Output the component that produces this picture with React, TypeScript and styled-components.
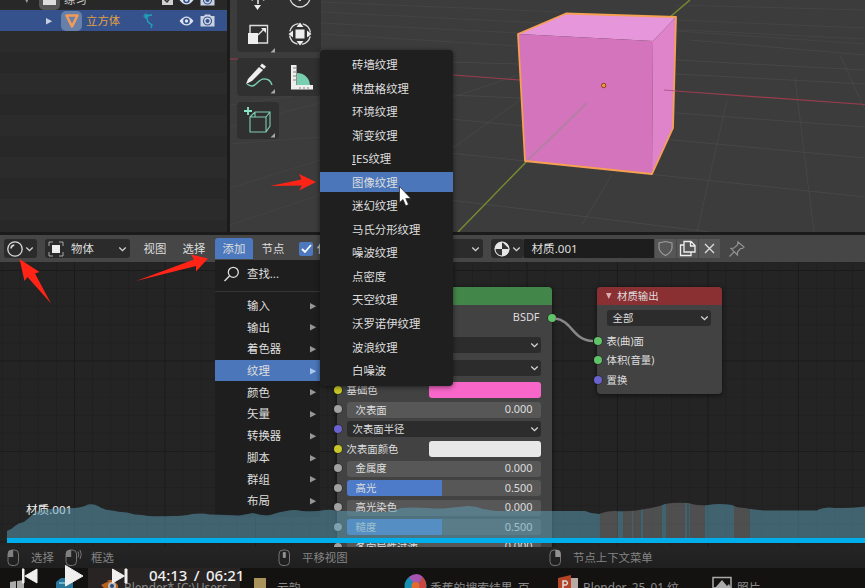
import React from "react";
import styled, { createGlobalStyle } from "styled-components";

const Global = createGlobalStyle`
  * { box-sizing: border-box; }
  body { margin: 0; overflow: hidden; background: #1b1b1b; }
`;

const Screen = styled.div`
  position: relative;
  width: 865px;
  height: 588px;
  overflow: hidden;
  display: grid;
  grid-template-rows: 235px 27px 285px 21px 20px;
  font: 11.4px/1 "Noto Sans", "Noto Sans CJK SC", sans-serif;
  color: #dedede;
  white-space: nowrap;
`;

/* ---------- upper editors ---------- */
const TopArea = styled.div`
  display: grid;
  grid-template-columns: 227px 635px;
  column-gap: 3px;
  height: 232px;
  overflow: hidden;
`;
const Outliner = styled.div`
  background: repeating-linear-gradient(#282828 0 21px, #2b2b2b 21px 42px);
  background-position: 0 10px;
`;
const OutlinerRow = styled.div<{ $active?: boolean; $indent: number }>`
  display: flex;
  align-items: center;
  height: 21px;
  padding-left: ${(p) => p.$indent}px;
  margin-top: ${(p) => (p.$active ? 0 : -11)}px;
  background: ${(p) => (p.$active ? "#35528c" : "transparent")};
  color: ${(p) => (p.$active ? "#e6a040" : "#c8c8c8")};
`;
const RowIcon = styled.span<{ $bg: string }>`
  display: grid;
  place-items: center;
  width: 21px;
  height: 20px;
  margin: 0 4px 0 8px;
  border-radius: 5px;
  background: ${(p) => p.$bg};
`;
const BoneSlot = styled.span`
  display: grid;
  margin-left: 12px;
`;
const RowTools = styled.span`
  display: flex;
  align-items: center;
  gap: 6px;
  margin: 0 12px 0 auto;
`;
const Viewport = styled.div`
  position: relative;
  background: #3c3c3c;
  overflow: hidden;
`;
const Scene = styled.svg`
  position: absolute;
  inset: 0;
`;
const ToolShelf = styled.div`
  position: absolute;
  left: 7px;
  top: -19px;
  display: flex;
  flex-direction: column;
  align-items: flex-start;
  gap: 6px;
`;
const ToolGroup = styled.div<{ $cols: number; $h: number }>`
  display: grid;
  grid-template-columns: repeat(${(p) => p.$cols}, 42px);
  height: ${(p) => p.$h}px;
  border-radius: 4px;
  background: #303030;
`;
const Tool = styled.div`
  display: grid;
  place-items: center;
  height: 36px;
`;

/* ---------- node editor header ---------- */
const Header = styled.div`
  display: flex;
  align-items: center;
  padding: 0 0 0 4px;
  background: #464646;
`;
const Chip = styled.div<{ $w: number; $ml?: number }>`
  display: flex;
  align-items: center;
  justify-content: space-between;
  flex: none;
  width: ${(p) => p.$w}px;
  height: 19px;
  margin-left: ${(p) => p.$ml ?? 0}px;
  padding: 0 1px 0 3px;
  border-radius: 3px;
  background: #2b2b2b;
  svg { flex: none; }
`;
const ChipText = styled.span`
  flex: 1;
  margin-left: 7px;
`;
const Tab = styled.div<{ $w: number; $ml?: number; $on?: boolean }>`
  flex: none;
  width: ${(p) => p.$w}px;
  height: 21px;
  margin-left: ${(p) => p.$ml ?? 0}px;
  line-height: 21px;
  text-align: center;
  border-radius: 3px 3px 0 0;
  background: ${(p) => (p.$on ? "#4c78bd" : "transparent")};
`;
const Check = styled.div`
  display: grid;
  place-items: center;
  flex: none;
  width: 14px;
  height: 14px;
  margin: 0 4px 0 6px;
  border-radius: 2px;
  background: #4c78bd;
`;
const UseLabel = styled.span`
  flex: none;
  width: 12px;
`;
const NameField = styled.div`
  flex: none;
  width: 130px;
  height: 19px;
  padding-left: 8px;
  line-height: 19px;
  font-size: 11.6px;
  background: #1d1d1d;
`;
const SmallButton = styled.div`
  display: grid;
  place-items: center;
  width: 21px;
  height: 19px;
  margin-left: 1px;
  background: #565656;
`;
const PinSlot = styled.div`
  display: grid;
  margin-left: 8px;
`;

/* ---------- node canvas ---------- */
const Canvas = styled.div`
  position: relative;
  overflow: hidden;
  background-color: #242424;
  background-image:
    linear-gradient(90deg, #1b1b1b 1px, transparent 1px),
    linear-gradient(#1b1b1b 1px, transparent 1px),
    linear-gradient(90deg, #202020 1px, transparent 1px),
    linear-gradient(#202020 1px, transparent 1px);
  background-size: 90.5px 90.5px, 90.5px 90.5px, 18.1px 18.1px, 18.1px 18.1px;
  background-position: 74px 8px;
`;
const CanvasLabel = styled.div`
  position: absolute;
  left: 26px;
  top: 242px;
  font-size: 11.6px;
  color: #f0f0f0;
`;
const Node = styled.div<{ $x: number; $w: number; $h: number }>`
  position: absolute;
  left: ${(p) => p.$x}px;
  top: 24.5px;
  width: ${(p) => p.$w}px;
  height: ${(p) => p.$h}px;
  border-radius: 4px;
  background: #424242;
  box-shadow: 0 1px 5px #0009;
  font-size: 10.4px;
`;
const NodeTitle = styled.div<{ $c: string }>`
  display: flex;
  align-items: center;
  gap: 4px;
  height: 18.5px;
  padding-left: 8px;
  border-radius: 4px 4px 0 0;
  background: ${(p) => p.$c};
`;
const Rows = styled.div<{ $top: number }>`
  display: flex;
  flex-direction: column;
  gap: 3.1px;
  padding: ${(p) => p.$top}px 11.5px 0 9.5px;
`;
const Row = styled.div<{ $mb?: number; $end?: boolean }>`
  position: relative;
  display: flex;
  align-items: center;
  justify-content: ${(p) => (p.$end ? "flex-end" : "space-between")};
  height: 16.5px;
  margin-bottom: ${(p) => p.$mb ?? 0}px;
`;
const Socket = styled.i<{ $c: string; $right?: boolean }>`
  position: absolute;
  ${(p) => (p.$right ? "right: -15px" : "left: -13px")};
  top: 4px;
  width: 8px;
  height: 8px;
  border-radius: 50%;
  background: ${(p) => p.$c};
  box-shadow: 0 0 0 0.5px #1c1c1c;
`;
const Value = styled.span`
  font-size: 10.9px;
`;
const OutLabel = styled(Value)`
  margin-right: 1px;
`;
const Field = styled.div<{ $fill?: number; $dark?: boolean }>`
  flex: 1;
  display: flex;
  align-items: center;
  justify-content: space-between;
  height: 16px;
  padding: 0 ${(p) => (p.$dark ? "0 0 6px" : "8px 0 9px")};
  border-radius: 3px;
  background: ${(p) =>
    p.$dark ? "#2c2c2c" : `linear-gradient(90deg, #4d7bc9 ${p.$fill ?? 0}%, #575757 ${p.$fill ?? 0}%)`};
`;
const Swatch = styled.div<{ $c: string }>`
  width: 112px;
  height: 16.5px;
  border-radius: 3px;
  background: ${(p) => p.$c};
`;
const Link = styled.svg`
  position: absolute;
  left: 545px;
  top: 45px;
`;

/* ---------- menus ---------- */
const AddMenu = styled.div`
  position: absolute;
  left: 215px;
  top: 259.5px;
  width: 105px;
  height: 257px;
  padding-top: 4px;
  background: #1e1e1e;
`;
const SearchRow = styled.div`
  display: flex;
  align-items: center;
  gap: 7px;
  height: 21px;
  padding-left: 8px;
`;
const Separator = styled.div`
  height: 1px;
  margin: 6px 0 3.8px;
  background: #353535;
`;
const AddItem = styled.div<{ $on?: boolean }>`
  display: flex;
  align-items: center;
  justify-content: space-between;
  height: 20.5px;
  margin-bottom: 1.22px;
  padding: 0 3px 0 32px;
  background: ${(p) => (p.$on ? "#4b76b9" : "transparent")};
`;
const TextureMenu = styled.div`
  position: absolute;
  left: 320px;
  top: 50px;
  width: 132.5px;
  height: 335.5px;
  padding-top: 4px;
  display: flex;
  flex-direction: column;
  gap: 3.05px;
  border-radius: 4px;
  background: #1f1f1f;
  box-shadow: 0 1px 5px #0008;
`;
const TextureItem = styled.div<{ $on?: boolean }>`
  flex: none;
  height: 20.5px;
  padding-left: 32px;
  line-height: 21px;
  background: ${(p) => (p.$on ? "#4b76b9" : "transparent")};
`;

/* ---------- bottom bars ---------- */
const StatusBar = styled.div`
  display: grid;
  grid-template-columns: 58px 213px 271px 1fr;
  align-items: center;
  padding-left: 7px;
  background: linear-gradient(#252525, #1f1f1f);
  color: #858585;
`;
const Hint = styled.span<{ $gap: number }>`
  display: flex;
  align-items: center;
  gap: ${(p) => p.$gap}px;
`;
const Taskbar = styled.div`
  display: grid;
  grid-template-columns: 45px 43px 152px 158px 156px 154px 157px;
  height: 20px;
  overflow: hidden;
  background: #141211;
  color: #8b8b8b;
`;
const Task = styled.div<{ $on?: boolean; $pl: number; $gap?: number }>`
  display: flex;
  gap: ${(p) => p.$gap ?? 4}px;
  padding-left: ${(p) => p.$pl}px;
  background: ${(p) => (p.$on ? "#272423" : "transparent")};
  svg { flex: none; }
`;
const TaskText = styled.span`
  padding-top: 14px;
  font-size: 11.8px;
`;

/* ---------- player overlay ---------- */
const Overlay = styled.svg`
  position: absolute;
  left: 0;
  top: 0;
  pointer-events: none;
`;
const Player = styled.div`
  position: absolute;
  left: 22px;
  top: 564px;
  height: 24px;
  display: flex;
  align-items: center;
  color: #efefef;
`;
const Time = styled.span`
  margin: -2px 0 0 21px;
  font: 500 15px/24px "Noto Sans", sans-serif;
  word-spacing: 2.5px;
`;

const Chevron = () => (
  <svg width="13" height="10" viewBox="0 0 13 10">
    <path d="M3.3 3.5 6.5 6.7 9.7 3.5" fill="none" stroke="#d6d6d6" strokeWidth="1.3" />
  </svg>
);
const Triangle = ({ down, color = "#a0a0a0" }: { down?: boolean; color?: string }) => (
  <svg width="8" height="8" viewBox="0 0 8 8">
    <path d={down ? "M1 1h5.5L3.8 7z" : "M1 1v6.4L7.2 4.2z"} fill={color} />
  </svg>
);
const Eye = () => (
  <svg width="15" height="12" viewBox="0 0 15 12">
    <path d="M.5 6Q7.5-3 14.5 6 7.5 15 .5 6" fill="#dce3ee" />
    <circle cx="7.5" cy="6" r="3.3" fill="#35528c" />
    <circle cx="7.5" cy="6" r="1.7" fill="#dce3ee" />
  </svg>
);
const Camera = () => (
  <svg width="15" height="13" viewBox="0 0 15 13">
    <path d="M.5 2H4L5 .5h5L11 2h3.5v10.5H.5z" fill="#c9d2e0" />
    <circle cx="7.5" cy="7" r="4" fill="none" stroke="#35528c" strokeWidth="1.1" />
    <circle cx="7.5" cy="7" r="2" fill="#35528c" />
  </svg>
);
const Mouse = ({ side }: { side: "left" | "mid" | "right" | "drag" }) => (
  <svg width={side === "drag" ? 17 : 13} height="18" viewBox={`0 0 ${side === "drag" ? 17 : 13} 18`}>
    <rect x="1" y="1" width="10.5" height="15.5" rx="4" fill="none" stroke="#747474" />
    {side === "mid" ? (
      <rect x="4.8" y="3" width="3" height="6" rx="1" fill="#929292" />
    ) : side === "right" ? (
      <path d="M6.3 1H9q2.5.5 2.5 3v4H6.3z" fill="#929292" />
    ) : (
      <path d="M6.2 1H4Q1 1.5 1 4v4h5.2z" fill="#808080" />
    )}
    {side === "drag" && <path d="M13 2.5q1.5 3 0 6M15 1q2.5 4.500 0 9" fill="none" stroke="#777" />}
  </svg>
);
const Corner = () => <path d="M36 31v4.500h-4.500z" fill="#a8a8a8" />;

const addItems = ["输入", "输出", "着色器", "纹理", "颜色", "矢量", "转换器", "脚本", "群组", "布局"];
const textures = [
  "砖墙纹理", "棋盘格纹理", "环境纹理", "渐变纹理", "IES纹理", "图像纹理", "迷幻纹理",
  "马氏分形纹理", "噪波纹理", "点密度", "天空纹理", "沃罗诺伊纹理", "波浪纹理", "白噪波",
];
const YELLOW = "#c7c729";
const GREY = "#a1a1a1";
const PURPLE = "#6a63cf";
const GREEN = "#5fc368";
const sliders: [string, string, number][] = [
  ["金属度", "0.000", 0],
  ["高光", "0.500", 49],
  ["高光染色", "0.000", 0],
  ["糙度", "0.500", 49],
  ["各向异性过滤", "0.000", 0],
];
const WAVE =
  "M7 539V531Q12 529 15 526T24 522Q29 518 34 513 41 509 52 509 67 508 75 508 83 507 88 504.500 94 503.500 98 506 103 510 112 510.500 118 512 127 512.500 135 515 142 515 150 517 172 516 184 516 192 514 202 513 210 514.500 230 515 239 515.500 246 514 253 513Q262 516 270 515 279 512 286 511 295 509 302 511 315 512 325 510 331 509 337 511L346 511 382 512Q393 511 401 508 411 507 428 508 439 509 448 508 459 507 468 506 476 506 483 509L496 511 585 511Q592 514 599 514 606 511 615 511 632 512 645 509 658 507 665 504 675 502 688 503 697 506 708 505 719 503 732 505 737 508 745 508 754 510 765 510.500L817 510.500Q824 506 835 508 853 508 865 506.500V539Z";
const stripes: [number, number][] = [
  [600, 18], [623, 9], [633, 7.500], [643, 8.500], [652, 9.500], [666, 19], [687, 2], [690.500, 14.500], [734, 15.500],
];

export default function App() {
  return (
    <>
      <Global />
      <Screen>
        <TopArea>
          <Outliner>
            <OutlinerRow $indent={23}>
              <Triangle down />
              <RowIcon $bg="#555">
                <svg width="13" height="11"><path d="M0 0h13v11H0z" fill="#ddd" /><path d="M4 4h5" stroke="#555" /></svg>
              </RowIcon>
              练习
              <RowTools>
                <svg width="11" height="11"><path d="M0 0h11v11H0z" fill="#d0d0d0" /><path d="m2 5 3 3 4-5" fill="none" stroke="#333" strokeWidth="1.5" /></svg>
                <Eye /><Camera />
              </RowTools>
            </OutlinerRow>
            <OutlinerRow $active $indent={45}>
              <Triangle color="#c6d1e2" />
              <RowIcon $bg="#6680aa">
                <svg width="16" height="16" viewBox="0 0 16 16"><path d="M2.500 2.500h11L8 13.500z" fill="none" stroke="#f39a58" strokeWidth="2.600" strokeLinejoin="round" /></svg>
              </RowIcon>
              立方体
              <BoneSlot>
                <svg width="24" height="18" viewBox="0 0 24 18">
                  <path d="M13 4 20 3M14 4l2 6 4 3-1 3" fill="none" stroke="#20a5b8" strokeWidth="1.300" />
                  <circle cx="14" cy="4" r="2" fill="none" stroke="#20a5b8" />
                </svg>
              </BoneSlot>
              <RowTools><Eye /><Camera /></RowTools>
            </OutlinerRow>
          </Outliner>
          <Viewport>
            <Scene width="635" height="232" viewBox="230 0 635 232">
              <g stroke="#4a4a4a" strokeWidth="1" fill="none">
                <path d="M230 105 320 92M230 127 330 100M230 144 320 137M230 188 320 160M230 225 320 195" strokeOpacity=".5" />
                <path d="M450 95 520 98M450 119 865 158M450 153 865 197M450 200 710 232M676 113 865 127M676 74 865 84M676 60 865 70M450 62 520 64" strokeOpacity=".8" />
                <path d="M450 150 520 100M612 174 582 225M727 100 697 232M795 78 814 232M840 55 865 110M690 40 865 55M450 98 518 75" strokeOpacity=".7" />
                <path d="M320 12 865 39M320 23 520 33M320 34 520 46M676 20 865 28M676 5 865 10M320 2 560 12M676 31 865 44" strokeOpacity=".55" />
              </g>
              <path d="M230 59h8M453 75l67 5" stroke="#9b3d4d" strokeWidth="1.200" />
              <path d="M690 0 670 17M527 161 458 232" stroke="#758a30" strokeWidth="1.500" />
              <path d="M518 34 566 13.500 676 17 653 41z" fill="#e696da" />
              <path d="M518 34 653 41 652 174 525 161z" fill="#d374bd" />
              <path d="M653 41 676 17 673 128 652 174z" fill="#df84ca" />
              <path d="M587 103 527 161" stroke="#ae829c" strokeWidth="2" strokeOpacity=".8" />
              <path d="M518 34 566 13.500 676 17 673 128 652 174 525 161z" fill="none" stroke="#f5a052" strokeWidth="1.800" strokeLinejoin="round" />
              <path d="M664 90 676 91" stroke="#aa5a8c" />
              <path d="m676 91 189 13.500" stroke="#9b3d4d" strokeWidth="1.200" />
              <circle cx="603.700" cy="85.500" r="2.200" fill="#ef9a3c" stroke="#8c3d1c" />
            </Scene>
            <ToolShelf>
              <ToolGroup $cols={2} $h={71}>
                <Tool><svg width="38" height="36"><path d="M19 16v7M9 17l5 2M29 17l-5 2" stroke="#eee" strokeWidth="1.500" /><path d="M15 24h7l-3.500 5z" fill="#eee" /></svg></Tool>
                <Tool><svg width="38" height="36"><circle cx="19" cy="16" r="10" fill="none" stroke="#ddd" strokeWidth="1.300" /><path d="m15 17 4 3 4-5" fill="none" stroke="#ddd" /></svg></Tool>
                <Tool><svg width="38" height="36"><path d="M11 18V8.500h17.500V26H18M19 18l6-6" fill="none" stroke="#ddd" strokeWidth="1.400" /><path d="M22 11h5v5z" fill="#eee" /><path d="M9 16h10v11H9z" fill="#eee" /><Corner /></svg></Tool>
                <Tool><svg width="38" height="36"><circle cx="19" cy="17" r="10.500" fill="none" stroke="#ddd" strokeWidth="1.400" strokeDasharray="12 4.500" strokeDashoffset="-2.500" /><path d="M14.500 12.500h9v9h-9zM15.500 10h7L19 5.500zM15.500 24h7L19 28.500zM12 13.500v7L7.500 17zM26 13.500v7l4.500-3.500z" fill="#eee" /></svg></Tool>
              </ToolGroup>
              <ToolGroup $cols={2} $h={38}>
                <Tool><svg width="38" height="36"><path d="m9 21 11-12 4 3-11 11-6 3z" fill="#eee" /><path d="m21 8 2-2.500 4 3-2 2.500z" fill="#eee" /><path d="M8 26c9 7 11-7 18-5 4 0 6 3 7 6" fill="none" stroke="#7dcdb2" strokeWidth="1.400" /><Corner /></svg></Tool>
                <Tool><svg width="38" height="36"><path d="M16 15c8 0 13 6 13 13H16z" fill="#77cfb0" /><path d="M10 7h5.500v20H32v4.500H10z" fill="#eee" /><path d="M15 10h-3m3 4h-3m3 4h-3m3 4h-3m7 9v-2m4 2v-2m4 2v-2" stroke="#555" strokeWidth=".7" /></svg></Tool>
              </ToolGroup>
              <ToolGroup $cols={1} $h={37}>
                <Tool><svg width="38" height="36"><path d="M11 15h16v15H11zM11 15l5-5h15v14l-4 6M27 15l4-5M16 10v5" fill="none" stroke="#7dcdb2" strokeWidth="1.100" /><path d="M9 5v8M5 9h8" stroke="#8ae7c5" strokeWidth="1.800" /><Corner /></svg></Tool>
              </ToolGroup>
            </ToolShelf>
          </Viewport>
        </TopArea>

        <Header>
          <Chip $w={33}>
            <svg width="16" height="16"><circle cx="8" cy="8" r="7.200" fill="none" stroke="#ddd" strokeWidth="1.300" /><path d="M4 7.500q.2-3 3.300-3.500" fill="none" stroke="#ddd" strokeWidth="1.600" /></svg>
            <Chevron />
          </Chip>
          <Chip $w={85} $ml={8}>
            <svg width="16" height="16"><path d="M5 1H1v4M11 1h4v4M1 11v4h4M15 11v4h-4" fill="none" stroke="#a9a9a9" /><path d="M4 4h8v8H4z" fill="#eee" /></svg>
            <ChipText>物体</ChipText>
            <Chevron />
          </Chip>
          <Tab $w={50}>视图</Tab>
          <Tab $w={28}>选择</Tab>
          <Tab $w={38} $ml={7} $on>添加</Tab>
          <Tab $w={40}>节点</Tab>
          <Check><svg width="11" height="10"><path d="m1 5 3 3 6-7" fill="none" stroke="#fff" strokeWidth="1.800" /></svg></Check>
          <UseLabel>使</UseLabel>
          <Chip $w={90} $ml={63.500}><ChipText /><Chevron /></Chip>
          <Chip $w={33} $ml={8}>
            <svg width="16" height="16"><circle cx="8" cy="8" r="7.300" fill="#e6e6e6" /><path d="M8 .7v7.300H1A7.300 7.300 0 0 0 8 15.300V8h7.300" fill="#333" /><circle cx="8" cy="8" r="7" fill="none" stroke="#e6e6e6" /></svg>
            <Chevron />
          </Chip>
          <NameField>材质.001</NameField>
          <SmallButton><svg width="17" height="17"><path d="M8.500 1.500 15 3v5q-.5 4.500-6.500 7.500Q2.500 12.500 2 8V3z" fill="none" stroke="#9b9b9b" strokeWidth="1.200" /></svg></SmallButton>
          <SmallButton><svg width="17" height="17"><path d="M5 1.500h7l4 4V12H5zM11.500 1.500V6H16M5 5H1.500v10.500H12V12" fill="none" stroke="#eee" strokeWidth="1.300" /></svg></SmallButton>
          <SmallButton><svg width="13" height="13"><path d="m2 2 9 9M11 2l-9 9" stroke="#ddd" strokeWidth="1.300" /></svg></SmallButton>
          <PinSlot><svg width="18" height="18"><path d="m10 2 6 5-1.500 1.500h-2L9.500 12v3L3 8.500l3-.5 3.500-3zM6 12l-4.500 4.500" fill="none" stroke="#929292" strokeWidth="1.200" /></svg></PinSlot>
        </Header>

        <Canvas>
          <CanvasLabel>材质.001</CanvasLabel>
          <Node $x={337} $w={215} $h={280}>
            <NodeTitle $c="#43864a" />
            <Rows $top={4.500}>
              <Row $end $mb={8}><OutLabel>BSDF</OutLabel><Socket $c={GREEN} $right /></Row>
              <Row $mb={3.300}><Field $dark><span /><Chevron /></Field></Row>
              <Row $mb={2.300}><Field $dark><span /><Chevron /></Field></Row>
              <Row><Socket $c={YELLOW} />基础色<Swatch $c="#f766c8" /></Row>
              <Row><Socket $c={GREY} /><Field><span>次表面</span><Value>0.000</Value></Field></Row>
              <Row><Socket $c={PURPLE} /><Field $dark><span>次表面半径</span><Chevron /></Field></Row>
              <Row><Socket $c={YELLOW} />次表面颜色<Swatch $c="#e8e8e8" /></Row>
              {sliders.map(([name, value, fill]) => (
                <Row key={name}><Socket $c={GREY} /><Field $fill={fill}><span>{name}</span><Value>{value}</Value></Field></Row>
              ))}
            </Rows>
          </Node>
          <Link width="60" height="45"><path d="M10 11.500C27 13 28 34 48 34" fill="none" stroke="#888" strokeWidth="2.500" /></Link>
          <Node $x={597} $w={125} $h={107}>
            <NodeTitle $c="#8a3033"><Triangle down color="#ddb0b0" />材质输出</NodeTitle>
            <Rows $top={5}>
              <Row $mb={3}><Field $dark><span>全部</span><Chevron /></Field></Row>
              <Row><Socket $c={GREEN} />表(曲)面</Row>
              <Row><Socket $c={GREEN} />体积(音量)</Row>
              <Row><Socket $c={PURPLE} />置换</Row>
            </Rows>
          </Node>
        </Canvas>

        <StatusBar>
          <Hint $gap={11}><Mouse side="left" />选择</Hint>
          <Hint $gap={9}><Mouse side="drag" />框选</Hint>
          <Hint $gap={11}><Mouse side="mid" />平移视图</Hint>
          <Hint $gap={11}><Mouse side="right" />节点上下文菜单</Hint>
        </StatusBar>
        <Taskbar>
          <Task $pl={9}><svg width="16" height="20"><path d="M1 14l6-1v7H1zM8 13l7-1v8H8z" fill="#aaa" /></svg></Task>
          <Task $pl={10}><svg width="19" height="20"><path d="M1 14 6 10h12v10H1z" fill="#28779b" /><path d="M4 15h11" stroke="#72b4ce" strokeWidth="2" /></svg></Task>
          <Task $on $pl={13} $gap={3}>
            <svg width="20" height="20"><path d="m0 17 8-4-2-1h6l5 5v3H3z" fill="#b76020" /><circle cx="11" cy="18" r="4" fill="#bbb" /><circle cx="11" cy="18" r="2" fill="#274977" /></svg>
            <TaskText>Blender* [C:\Users...</TaskText>
          </Task>
          <Task $pl={14} $gap={10}><svg width="13" height="20"><path d="M0 10h12v10H0z" fill="#aa945b" /></svg><TaskText>云韵</TaskText></Task>
          <Task $pl={6} $gap={3}>
            <svg width="23" height="20"><circle cx="11.500" cy="18" r="11" fill="#168fb4" /><path d="M5 9q8-6 14 0l-7 9z" fill="#a955b0" /><path d="M19 9q4 5 3 11H11z" fill="#c94742" /><circle cx="11.500" cy="18" r="4" fill="#e16c2b" /></svg>
            <TaskText>香蕉的搜索结果_百</TaskText>
          </Task>
          <Task $pl={4}>
            <svg width="21" height="20"><path d="M10 10h10v10H10z" fill="#b8aaa4" /><path d="M0 10 13 7v13H0z" fill="#b44425" /><path d="M5 20v-7h3q3 2 0 4H5" fill="none" stroke="#ddd" strokeWidth="1.500" /></svg>
            <TaskText>Blender_25_01 纹</TaskText>
          </Task>
          <Task $pl={4}>
            <svg width="21" height="20"><path d="M1 9.500h18V20H1z" fill="none" stroke="#aaa" strokeWidth="1.500" /><path d="m3 20 7-8 5 6 2-2 2 4z" fill="#aaa" /></svg>
            <TaskText>照片</TaskText>
          </Task>
        </Taskbar>

        <AddMenu>
          <SearchRow>
            <svg width="17" height="17"><circle cx="10.300" cy="6.300" r="5" fill="none" stroke="#ddd" strokeWidth="1.300" /><path d="m6.500 10-5 5" stroke="#ddd" strokeWidth="1.500" /></svg>
            查找...
          </SearchRow>
          <Separator />
          {addItems.map((t) => (
            <AddItem key={t} $on={t === "纹理"}>{t}<Triangle color={t === "纹理" ? "#a9c8ef" : "#969696"} /></AddItem>
          ))}
        </AddMenu>
        <TextureMenu>
          {textures.map((t) => (
            <TextureItem key={t} $on={t === "图像纹理"}>{t.startsWith("IES") ? <><u>I</u>ES纹理</> : t}</TextureItem>
          ))}
        </TextureMenu>

        <Overlay width="865" height="588">
          <defs><clipPath id="wave"><path d={WAVE} /></clipPath></defs>
          <mask id="played">
            <path d="M0 480h865v70H0z" fill="#fff" />
            {stripes.map(([x, w]) => <rect key={x} x={x} y="490" width={w} height="50" fill="#000" />)}
          </mask>
          <path d={WAVE} fill="#5ea2bc" fillOpacity=".5" mask="url(#played)" />
          <g clipPath="url(#wave)">
            {stripes.map(([x, w]) => <rect key={x} x={x} y="490" width={w} height="50" fill="#808080" fillOpacity=".47" />)}
          </g>
          <rect x="7" y="538" width="860" height="5" fill="#00aeec" />
          <g fill="#ff2416">
            <path d="m19.500 259 20 13-4.500 1.500L51 303.500 27.500 277l-3 4z" />
            <path d="m208 258.500-17-4 3 5-58 21.500 60-15v5.500z" />
            <path d="m316 182-17-8 2.500 5.500L270 186l32-.5-3 5z" />
          </g>
          <path d="M399.500 186.500v16l3.500-3 2.700 6.300 2.800-1.200-2.700-6.100h5z" fill="#fff" stroke="#222" strokeWidth=".7" />
        </Overlay>
        <Player>
          <svg width="106" height="24" fill="#efefef">
            <path d="M0 5h2v14H0zM15 5v14L3 12zM43.500 1.500 61 12 43.500 22zM90.500 5v14l12-7zM103 5h2v14h-2z" stroke="#efefef" strokeWidth="1" strokeLinejoin="round" />
          </svg>
          <Time>04:13 / 06:21</Time>
        </Player>
      </Screen>
    </>
  );
}
